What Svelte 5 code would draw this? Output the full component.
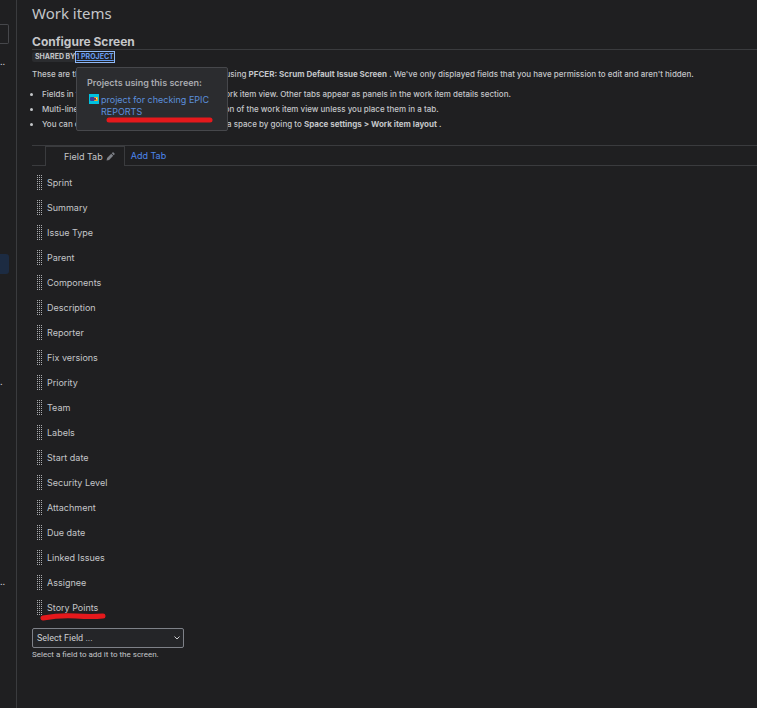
<script lang="ts">
	interface SideItem {
		kind: 'search' | 'dots' | 'selected';
		text?: string;
	}

	const sideItems: SideItem[] = [
		{ kind: 'search' },
		{ kind: 'dots', text: '..' },
		{ kind: 'selected' },
		{ kind: 'dots', text: '.' },
		{ kind: 'dots', text: '..' }
	];

	const fields = [
		'Sprint',
		'Summary',
		'Issue Type',
		'Parent',
		'Components',
		'Description',
		'Reporter',
		'Fix versions',
		'Priority',
		'Team',
		'Labels',
		'Start date',
		'Security Level',
		'Attachment',
		'Due date',
		'Linked Issues',
		'Assignee',
		'Story Points'
	];

	let showProjects = $state(true);
	let selectedField = $state('');
</script>

<div class="page">
	<aside class="sidebar">
		{#each sideItems as item}
			<div class="side-item {item.kind}">{item.text ?? ''}</div>
		{/each}
	</aside>

	<main class="content">
		<h1>Work items</h1>
		<h2>Configure Screen</h2>

		<div class="shared">
			<span class="shared-label">SHARED BY</span>
			<button class="shared-btn" onclick={() => (showProjects = !showProjects)}>1 PROJECT</button>
			{#if showProjects}
				<div class="popup">
					<h3>Projects using this screen:</h3>
					<a class="project" href="#project">
						<svg class="avatar" viewBox="0 0 10 10" aria-hidden="true">
							<rect width="10" height="10" fill="#00c2e0" />
							<rect x="1" y="3" width="5" height="4" rx="1" fill="#3d3f9c" />
							<rect x="5" y="3" width="4" height="4" rx="1" fill="#f5a524" />
							<rect x="5" y="4" width="2" height="2" fill="#7a3b52" />
							<rect x="7" y="4" width="1" height="1" fill="#fbe3a0" />
						</svg>
						<span>project for checking EPIC REPORTS</span>
					</a>
					<svg class="mark popup-mark" viewBox="0 0 108 6" aria-hidden="true">
						<path d="M3 3H104" />
					</svg>
				</div>
			{/if}
		</div>

		<p class="intro">
			These are the fields that are shown for this screen using
			<b>PFCER: Scrum Default Issue Screen</b> . We've only displayed fields that you have permission
			to edit and aren't hidden.
		</p>
		<ul class="notes">
			<li>
				Fields in the first tab appear at the start of the work item view. Other tabs appear as
				panels in the work item details section.
			</li>
			<li>
				Multi-line text fields are placed in the main section of the work item view unless you place
				them in a tab.
			</li>
			<li>
				You can change the field layout of work items in a space by going to
				<b>Space settings &gt; Work item layout</b> .
			</li>
		</ul>

		<div class="tabs">
			<button class="tab">
				Field Tab
				<svg class="pencil" viewBox="0 0 10 10" aria-hidden="true">
					<path d="M.6 9.4L1.2 6.6L5.8 2L8 4.2L3.4 8.8Z" />
					<path d="M6.4 1.4L7.2 .6Q8 0 8.7 .7L9.3 1.3Q10 2 9.4 2.8L8.6 3.6Z" />
				</svg>
			</button>
			<button class="add-tab">Add Tab</button>
		</div>

		<ul class="fields">
			{#each fields as field}
				<li>
					<svg class="grip" viewBox="0 0 5 15" aria-hidden="true">
						<path d="M.5 0V15M2.5 0V15M4.5 0V15" />
					</svg>
					<span>{field}</span>
					{#if field === 'Story Points'}
						<svg class="mark field-mark" viewBox="0 0 68 8" aria-hidden="true">
							<path d="M3 5Q20 2 36 3T63 3" />
						</svg>
					{/if}
				</li>
			{/each}
		</ul>

		<div class="picker">
			<div class="select-wrap">
				<select id="field-select" bind:value={selectedField}>
					<option value="">Select Field ...</option>
				</select>
				<svg class="chevron" viewBox="0 0 8 6" aria-hidden="true">
					<path d="M1.5 1.5L4 4L6.5 1.5" />
				</svg>
			</div>
			<label for="field-select">Select a field to add it to the screen.</label>
		</div>
	</main>
</div>

<style>
	:global(body) {
		margin: 0;
		background: #1f1f21;
	}

	.page {
		display: flex;
		min-height: 100vh;
		background: #1f1f21;
		color: #c4c6c9;
		font-family: Inter, 'Liberation Sans', sans-serif;
		font-size: 9px;
		line-height: 15px;
	}

	h1,
	h2,
	h3,
	p,
	ul {
		margin: 0;
		padding: 0;
	}

	button {
		padding: 0;
		border: none;
		background: none;
		font: inherit;
		color: inherit;
		cursor: pointer;
	}

	.sidebar {
		flex: 0 0 16px;
		border-right: 1px solid #3a3b3e;
	}

	.side-item {
		box-sizing: border-box;
		width: 9px;
		height: 20px;
	}

	.search {
		margin-top: 24px;
		border: 1px solid #46474b;
		border-left: none;
		border-radius: 0 2px 2px 0;
	}

	.dots {
		margin-top: 10px;
	}

	.selected {
		margin-top: 180px;
		border-radius: 0 3px 3px 0;
		background: #1c2b42;
	}

	.selected + .dots {
		margin-top: 100px;
	}

	.dots + .dots {
		margin-top: 180px;
	}

	.content {
		flex: 1;
		min-width: 0;
		padding: 4px 0 24px 15px;
	}

	h1 {
		font: 400 15px/18px 'Noto Sans', sans-serif;
	}

	h2 {
		margin-top: 12px;
		border-bottom: 1px solid #3a3b3e;
		font-size: 12px;
		font-weight: 700;
		line-height: 15px;
	}

	.shared {
		position: relative;
		display: flex;
		align-items: center;
		height: 13px;
		font-size: 7px;
		font-weight: 700;
		line-height: 10px;
	}

	.shared-label {
		padding-left: 3px;
		border-radius: 2px;
		background: #2b2c2f;
	}

	.shared-btn {
		border: 1px solid #8fb8f6;
		color: #669df1;
		text-decoration: underline;
	}

	.popup {
		position: absolute;
		z-index: 1;
		top: 17px;
		left: 44px;
		box-sizing: border-box;
		width: 152px;
		padding: 9px 10px 12px;
		border: 1px solid #46474b;
		border-radius: 2px;
		background: #2b2c2f;
		font-size: 9px;
		font-weight: 400;
		line-height: 12px;
	}

	.popup h3 {
		font-size: 9px;
		font-weight: 600;
		line-height: 12px;
		color: #a9abaf;
	}

	.project {
		display: flex;
		gap: 2px;
		margin-top: 5px;
		padding-left: 2px;
		color: #5c8fdc;
		text-decoration: none;
	}

	.avatar {
		flex: none;
		width: 10px;
		height: 10px;
	}

	.mark {
		position: absolute;
		fill: none;
		stroke: #e5191c;
		stroke-width: 5;
		stroke-linecap: round;
	}

	.popup-mark {
		right: 13px;
		bottom: 7px;
		width: 108px;
		height: 6px;
	}

	.intro {
		margin-top: 4px;
		font-size: 8px;
		font-weight: 500;
		white-space: nowrap;
	}

	.notes {
		margin-top: 5px;
		padding-left: 10px;
		font-size: 8px;
		font-weight: 500;
		white-space: nowrap;
	}

	.intro b,
	.notes b {
		font-weight: 700;
	}

	.tabs {
		display: flex;
		align-items: stretch;
		height: 19px;
		margin-top: 13px;
		padding-left: 13px;
		border-top: 1px solid #3a3b3e;
		border-bottom: 1px solid #3a3b3e;
	}

	.tab {
		display: flex;
		align-items: center;
		gap: 3px;
		margin-bottom: -1px;
		padding: 0 9px 0 18px;
		border: 1px solid #3a3b3e;
		border-bottom: none;
		background: #1f1f21;
	}

	.pencil {
		width: 9px;
		height: 9px;
		fill: #7e8188;
	}

	.add-tab {
		padding-left: 6px;
		color: #4c86ee;
	}

	.fields {
		margin-top: 4px;
		list-style: none;
	}

	.fields li {
		position: relative;
		display: flex;
		align-items: center;
		gap: 5px;
		height: 25px;
		padding-left: 5px;
	}

	.grip {
		width: 5px;
		height: 15px;
		fill: none;
		stroke: #a9abaf;
		stroke-dasharray: 1 1;
	}

	.field-mark {
		top: 18px;
		left: 8px;
		width: 68px;
		height: 8px;
	}

	.picker {
		margin-top: 8px;
	}

	.select-wrap {
		position: relative;
		width: 152px;
	}

	select {
		display: block;
		box-sizing: border-box;
		width: 100%;
		height: 20px;
		padding: 0 4px;
		border: 1px solid #7e8188;
		border-radius: 2px;
		background: #242528;
		color: #cecfd2;
		font: 9px/18px Roboto, sans-serif;
		appearance: none;
	}

	.chevron {
		position: absolute;
		top: 7px;
		right: 3px;
		width: 8px;
		height: 6px;
		fill: none;
		stroke: #cecfd2;
		pointer-events: none;
	}

	label {
		display: block;
		font: 8px/13px Roboto, sans-serif;
	}
</style>
